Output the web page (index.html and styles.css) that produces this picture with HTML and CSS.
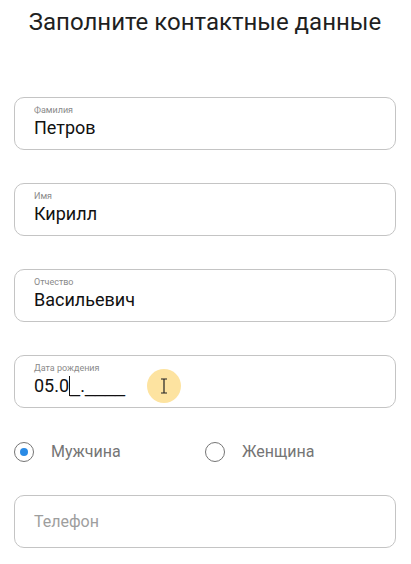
FILE: index.html
```html
<!DOCTYPE html>
<html lang="ru">
<head>
<meta charset="utf-8">
<link rel="stylesheet" href="styles.css">
</head>
<body>
<div class="page">
  <h1 class="title">Заполните контактные данные</h1>
  <div class="form">
    <div class="field">
      <span class="label">Фамилия</span>
      <span class="value">Петров</span>
    </div>
    <div class="field">
      <span class="label">Имя</span>
      <span class="value">Кирилл</span>
    </div>
    <div class="field">
      <span class="label">Отчество</span>
      <span class="value">Васильевич</span>
    </div>
    <div class="field">
      <span class="label">Дата рождения</span>
      <span class="value">05.0<span class="caret"></span><span class="mask">_</span>.<span class="mask">____</span></span>
      <span class="pointer">
        <svg width="8" height="16" viewBox="0 0 8 16"><path d="M1 1h6M4 1v14M1 15h6" fill="none" stroke="#222" stroke-width="1.2"/></svg>
      </span>
    </div>
    <div class="radios">
      <label class="radio"><span class="circle checked"></span><span class="rlabel">Мужчина</span></label>
      <label class="radio"><span class="circle"></span><span class="rlabel">Женщина</span></label>
    </div>
    <div class="field empty">
      <span class="placeholder">Телефон</span>
    </div>
  </div>
</div>
</body>
</html>
```
FILE: styles.css
```css
html, body {
  margin: 0;
  padding: 0;
  background: #fff;
}
body {
  font-family: Roboto, "Noto Sans", sans-serif;
  color: #212121;
}
.page {
  padding: 0 15px 0 14px;
}
.title {
  margin: 0;
  padding-top: 8px;
  height: 89px;
  text-align: center;
  font-size: 24px;
  font-weight: 400;
  line-height: 29px;
  color: #1f1f1f;
}
.form {
  display: flex;
  flex-direction: column;
  gap: 33px;
}
.field {
  position: relative;
  height: 53px;
  box-sizing: border-box;
  border: 1px solid #c4c4c4;
  border-radius: 10px;
  padding: 7px 19px 0;
  display: flex;
  flex-direction: column;
}
.label {
  font-size: 9px;
  line-height: 11px;
  color: #8a8a8a;
}
.value {
  font-size: 18px;
  line-height: 24px;
  color: #111;
  white-space: pre;
}
.mask {
  font-family: "Liberation Sans", Arial, sans-serif;
}
.caret {
  display: inline-block;
  width: 1px;
  height: 20px;
  background: #111;
  vertical-align: -4px;
}
.pointer {
  position: absolute;
  left: 132px;
  top: 13px;
  width: 34px;
  height: 34px;
  border-radius: 50%;
  background: #fde3a0;
  display: flex;
  align-items: center;
  justify-content: center;
}
.radios {
  display: flex;
  height: 21px;
  margin: 0;
  align-items: center;
}
.radio {
  display: flex;
  align-items: center;
  width: 191px;
}
.circle {
  width: 20px;
  height: 20px;
  border: 1.5px solid #757575;
  border-radius: 50%;
  position: relative;
  box-sizing: border-box;
  flex: none;
}
.circle.checked::after {
  content: "";
  position: absolute;
  left: 50%;
  top: 50%;
  width: 8px;
  height: 8px;
  margin: -4px 0 0 -4px;
  border-radius: 50%;
  background: #2a8be6;
}
.rlabel {
  margin-left: 17px;
  font-size: 16px;
  color: #757575;
}
.field.empty {
  justify-content: center;
  padding-top: 0;
}
.placeholder {
  font-size: 16px;
  color: #9e9e9e;
}
```
